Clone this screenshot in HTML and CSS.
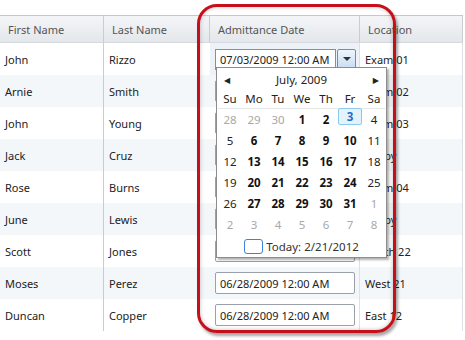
FILE: index.html
```html
<!DOCTYPE html>
<html lang="en">
<head>
    <meta charset="UTF-8">
    <title>Admittance Grid</title>
    <link rel="stylesheet" href="styles.css">
</head>
<body>

    <!-- Grid -->
    <div class="grid">
        <div class="head">
            <div class="cell col-first">First Name</div>
            <div class="cell col-last">Last Name</div>
            <div class="cell col-date">Admittance Date</div>
            <div class="cell col-loc">Location</div>
        </div>

        <div class="row">
            <div class="cell col-first">John</div>
            <div class="cell col-last">Rizzo</div>
            <div class="cell col-date current">
                <div class="picker">
                    <span class="input focus">07/03/2009 12:00 AM</span>
                    <span class="drop"><span class="caret"></span></span>
                </div>
            </div>
            <div class="cell col-loc">Exam 01</div>
        </div>
        <!-- these date boxes sit under the open calendar -->
        <div class="row alt">
            <div class="cell col-first">Arnie</div>
            <div class="cell col-last">Smith</div>
            <div class="cell col-date"><span class="input"></span></div>
            <div class="cell col-loc">Exam 02</div>
        </div>
        <div class="row">
            <div class="cell col-first">John</div>
            <div class="cell col-last">Young</div>
            <div class="cell col-date"><span class="input"></span></div>
            <div class="cell col-loc">Exam 03</div>
        </div>
        <div class="row alt">
            <div class="cell col-first">Jack</div>
            <div class="cell col-last">Cruz</div>
            <div class="cell col-date"><span class="input"></span></div>
            <div class="cell col-loc">Lobby</div>
        </div>
        <div class="row">
            <div class="cell col-first">Rose</div>
            <div class="cell col-last">Burns</div>
            <div class="cell col-date"><span class="input"></span></div>
            <div class="cell col-loc">Exam 04</div>
        </div>
        <div class="row alt">
            <div class="cell col-first">June</div>
            <div class="cell col-last">Lewis</div>
            <div class="cell col-date"><span class="input"></span></div>
            <div class="cell col-loc">Lobby</div>
        </div>
        <div class="row">
            <div class="cell col-first">Scott</div>
            <div class="cell col-last">Jones</div>
            <div class="cell col-date"><span class="input"></span></div>
            <div class="cell col-loc">South 22</div>
        </div>
        <div class="row alt">
            <div class="cell col-first">Moses</div>
            <div class="cell col-last">Perez</div>
            <div class="cell col-date"><span class="input">06/28/2009 12:00 AM</span></div>
            <div class="cell col-loc">West 21</div>
        </div>
        <div class="row">
            <div class="cell col-first">Duncan</div>
            <div class="cell col-last">Copper</div>
            <div class="cell col-date"><span class="input">06/28/2009 12:00 AM</span></div>
            <div class="cell col-loc">East 12</div>
        </div>
    </div>

    <!-- Calendar popup -->
    <div class="calendar">
        <div class="cal-nav">
            <span class="arrow">&#9664;</span>
            <span class="month">July, 2009</span>
            <span class="arrow">&#9654;</span>
        </div>
        <div class="cal-days">
            <span>Su</span><span>Mo</span><span>Tu</span><span>We</span><span>Th</span><span>Fr</span><span>Sa</span>
        </div>
        <div class="cal-dates">
            <span class="other">28</span><span class="other">29</span><span class="other">30</span><b>1</b><b>2</b><b class="selected">3</b><span>4</span>
            <span>5</span><b>6</b><b>7</b><b>8</b><b>9</b><b>10</b><span>11</span>
            <span>12</span><b>13</b><b>14</b><b>15</b><b>16</b><b>17</b><span>18</span>
            <span>19</span><b>20</b><b>21</b><b>22</b><b>23</b><b>24</b><span>25</span>
            <span>26</span><b>27</b><b>28</b><b>29</b><b>30</b><b>31</b><span class="other">1</span>
            <span class="other">2</span><span class="other">3</span><span class="other">4</span><span class="other">5</span><span class="other">6</span><span class="other">7</span><span class="other">8</span>
        </div>
        <div class="cal-today">
            <span class="today-box"></span>
            <span>Today: 2/21/2012</span>
        </div>
    </div>

    <!-- Highlight ring -->
    <div class="ring"></div>

</body>
</html>
```

FILE: styles.css
```css
body {
    font-family: 'Noto Sans', 'DejaVu Sans', sans-serif;
    font-size: 11px;
    color: #222;
    background-color: #fff;
    margin: 0;
    padding: 15px 0 0 0;
    width: 465px;
    height: 340px;
    overflow: hidden;
    position: relative;
}

/* Grid */
.grid {
    width: 463px;
    border-top: 1px solid #c4c8cd;
}
.head,
.row {
    display: flex;
}
.head {
    height: 26px;
    background: linear-gradient(#f4f5f7, #e4e7eb);
    border-bottom: 1px solid #d5d8dc;
    color: #555;
}
.head .cell {
    padding-left: 8px;
    border-right: 1px solid #c9cdd2;
}
.row {
    height: 32px;
}
.row.alt {
    background-color: #f4f7fa;
}
.cell {
    box-sizing: border-box;
    display: flex;
    align-items: center;
    padding-left: 5px;
    white-space: nowrap;
    overflow: hidden;
}
.col-first { width: 104px; border-right: 1px solid #c9cdd2; }
.col-last  { width: 106px; }
.col-date  { width: 150px; border-right: 1px solid #dde0e4; }
.col-loc   { width: 103px; border-right: 1px solid #dde0e4; }
.head .col-last { border-right: 1px solid #c9cdd2; }
.cell.current {
    background-color: #edf2f8;
}

/* Date inputs */
.input {
    box-sizing: border-box;
    width: 140px;
    height: 22px;
    padding-left: 4px;
    display: flex;
    align-items: center;
    border: 1px solid #9aa1aa;
    border-radius: 2px;
    background-color: #fff;
    color: #222;
}
.picker {
    display: flex;
    align-items: center;
    height: 21px;
}
.input.focus {
    width: 121px;
    height: 21px;
    border-color: #5b98d6;
    border-radius: 0;
}
.drop {
    box-sizing: border-box;
    width: 19px;
    height: 21px;
    margin-left: 1px;
    border: 1px solid #6f8fae;
    border-radius: 2px;
    background: linear-gradient(#eef5fc, #c6dcf1);
    display: flex;
    align-items: center;
    justify-content: center;
}
.caret {
    width: 0;
    height: 0;
    border-left: 4px solid transparent;
    border-right: 4px solid transparent;
    border-top: 4px solid #333;
}

/* Calendar popup */
.calendar {
    position: absolute;
    left: 216px;
    top: 67px;
    width: 171px;
    height: 191px;
    box-sizing: border-box;
    background-color: #fff;
    border: 1px solid #8d8d8d;
    box-shadow: 2px 2px 2px rgba(0, 0, 0, 0.3);
    padding: 0 1px;
    color: #222;
    font-size: 11.5px;
}
.cal-nav {
    height: 22px;
    display: flex;
    align-items: center;
    justify-content: space-between;
    padding: 0 6px 0 6px;
}
.arrow {
    font-size: 8px;
    color: #222;
}
.cal-days,
.cal-dates {
    display: grid;
    grid-template-columns: repeat(7, 24px);
    text-align: center;
}
.cal-days {
    height: 18px;
    line-height: 18px;
    border-bottom: 1px solid #e6e6e6;
}
.cal-dates span,
.cal-dates b {
    height: 21px;
    line-height: 21px;
}
.cal-dates b {
    font-weight: bold;
    color: #111;
}
.cal-dates .other {
    color: #a8a8a8;
}
.cal-dates .selected {
    box-sizing: border-box;
    height: 17px;
    line-height: 15px;
    margin-top: -1px;
    border: 1px solid #8cc9f0;
    border-radius: 2px;
    background-color: #e4f2fc;
    color: #1e6fcc;
}
.cal-today {
    height: 22px;
    display: flex;
    align-items: center;
    justify-content: center;
    gap: 3px;
    color: #333;
}
.today-box {
    box-sizing: border-box;
    width: 19px;
    height: 15px;
    border: 1px solid #3b82d8;
    border-radius: 3px;
}

/* Highlight ring */
.ring {
    position: absolute;
    left: 197px;
    top: 4px;
    width: 199px;
    height: 329px;
    box-sizing: border-box;
    border: 3px solid #c5101b;
    border-radius: 20px;
    box-shadow: 2px 3px 3px rgba(0, 0, 0, 0.35), inset 0 0 4px rgba(0, 0, 0, 0.25);
}
```
